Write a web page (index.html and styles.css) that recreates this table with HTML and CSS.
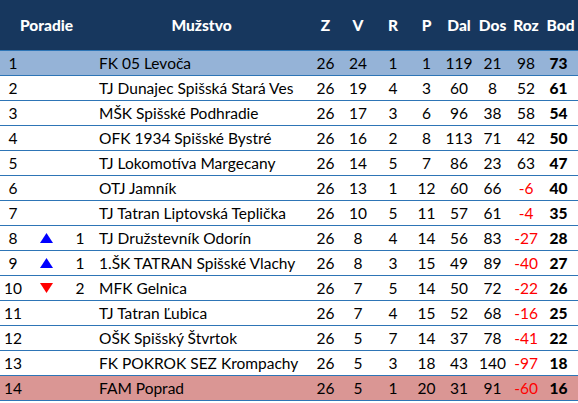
FILE: index.html
```html
<!DOCTYPE html>
<html lang="sk">
<head>
  <meta charset="UTF-8" />
  <title>Tabuľka</title>
  <link rel="stylesheet" href="styles.css">
</head>
<body>
  <table class="standings">
    <colgroup>
      <col class="c-rank"><col class="c-arrow"><col class="c-move"><col class="c-team">
      <col class="c-z"><col class="c-v"><col class="c-r"><col class="c-p">
      <col class="c-dal"><col class="c-dos"><col class="c-roz"><col class="c-bod">
    </colgroup>
    <thead>
      <tr>
        <th colspan="3">Poradie</th>
        <th>Mužstvo</th>
        <th>Z</th><th>V</th><th>R</th><th>P</th><th>Dal</th><th>Dos</th><th>Roz</th><th>Bod</th>
      </tr>
    </thead>
    <tbody>
      <tr class="leader">
        <td class="rank">1</td><td></td><td></td><td class="team">FK 05 Levoča</td>
        <td>26</td><td>24</td><td>1</td><td>1</td><td>119</td><td>21</td><td>98</td><td class="pts">73</td>
      </tr>
      <tr>
        <td class="rank">2</td><td></td><td></td><td class="team">TJ Dunajec Spišská Stará Ves</td>
        <td>26</td><td>19</td><td>4</td><td>3</td><td>60</td><td>8</td><td>52</td><td class="pts">61</td>
      </tr>
      <tr>
        <td class="rank">3</td><td></td><td></td><td class="team">MŠK Spišské Podhradie</td>
        <td>26</td><td>17</td><td>3</td><td>6</td><td>96</td><td>38</td><td>58</td><td class="pts">54</td>
      </tr>
      <tr>
        <td class="rank">4</td><td></td><td></td><td class="team">OFK 1934 Spišské Bystré</td>
        <td>26</td><td>16</td><td>2</td><td>8</td><td>113</td><td>71</td><td>42</td><td class="pts">50</td>
      </tr>
      <tr>
        <td class="rank">5</td><td></td><td></td><td class="team">TJ Lokomotíva Margecany</td>
        <td>26</td><td>14</td><td>5</td><td>7</td><td>86</td><td>23</td><td>63</td><td class="pts">47</td>
      </tr>
      <tr>
        <td class="rank">6</td><td></td><td></td><td class="team">OTJ Jamník</td>
        <td>26</td><td>13</td><td>1</td><td>12</td><td>60</td><td>66</td><td class="neg">-6</td><td class="pts">40</td>
      </tr>
      <tr>
        <td class="rank">7</td><td></td><td></td><td class="team">TJ Tatran Liptovská Teplička</td>
        <td>26</td><td>10</td><td>5</td><td>11</td><td>57</td><td>61</td><td class="neg">-4</td><td class="pts">35</td>
      </tr>
      <tr>
        <td class="rank">8</td>
        <td><svg class="arrow" width="13" height="10" viewBox="0 0 13 10"><polygon points="6.5,0 13,10 0,10" fill="#0000ff"/></svg></td>
        <td>1</td><td class="team">TJ Družstevník Odorín</td>
        <td>26</td><td>8</td><td>4</td><td>14</td><td>56</td><td>83</td><td class="neg">-27</td><td class="pts">28</td>
      </tr>
      <tr>
        <td class="rank">9</td>
        <td><svg class="arrow" width="13" height="10" viewBox="0 0 13 10"><polygon points="6.5,0 13,10 0,10" fill="#0000ff"/></svg></td>
        <td>1</td><td class="team">1.ŠK TATRAN Spišské Vlachy</td>
        <td>26</td><td>8</td><td>3</td><td>15</td><td>49</td><td>89</td><td class="neg">-40</td><td class="pts">27</td>
      </tr>
      <tr>
        <td class="rank">10</td>
        <td><svg class="arrow" width="13" height="10" viewBox="0 0 13 10"><polygon points="0,0 13,0 6.5,10" fill="#ff0000"/></svg></td>
        <td>2</td><td class="team">MFK Gelnica</td>
        <td>26</td><td>7</td><td>5</td><td>14</td><td>50</td><td>72</td><td class="neg">-22</td><td class="pts">26</td>
      </tr>
      <tr>
        <td class="rank">11</td><td></td><td></td><td class="team">TJ Tatran Ľubica</td>
        <td>26</td><td>7</td><td>4</td><td>15</td><td>52</td><td>68</td><td class="neg">-16</td><td class="pts">25</td>
      </tr>
      <tr>
        <td class="rank">12</td><td></td><td></td><td class="team">OŠK Spišský Štvrtok</td>
        <td>26</td><td>5</td><td>7</td><td>14</td><td>37</td><td>78</td><td class="neg">-41</td><td class="pts">22</td>
      </tr>
      <tr>
        <td class="rank">13</td><td></td><td></td><td class="team">FK POKROK SEZ Krompachy</td>
        <td>26</td><td>5</td><td>3</td><td>18</td><td>43</td><td>140</td><td class="neg">-97</td><td class="pts">18</td>
      </tr>
      <tr class="relegated">
        <td class="rank">14</td><td></td><td></td><td class="team">FAM Poprad</td>
        <td>26</td><td>5</td><td>1</td><td>20</td><td>31</td><td>91</td><td class="neg">-60</td><td class="pts">16</td>
      </tr>
    </tbody>
  </table>
</body>
</html>
```

FILE: styles.css
```css
* {
  box-sizing: border-box;
}
body {
  margin: 0;
  background: #fff;
  font-family: Lato, 'Open Sans', sans-serif;
  font-size: 15.5px;
  color: #000;
}
.standings {
  width: 578px;
  border-collapse: collapse;
  table-layout: fixed;
}
.c-rank { width: 26px; }
.c-arrow { width: 41px; }
.c-move { width: 26px; }
.c-team { width: 217px; }
.c-z { width: 31px; }
.c-v { width: 34px; }
.c-r { width: 36px; }
.c-p { width: 31px; }
.c-dal { width: 34px; }
.c-dos { width: 33px; }
.c-roz { width: 34px; }
.c-bod { width: 35px; }

.standings th {
  height: 50px;
  background: #17375e;
  color: #fff;
  font-weight: 900;
  text-align: center;
  padding: 0;
  border-bottom: 1px solid #2e75b6;
}
.standings td {
  height: 25px;
  padding: 0;
  text-align: center;
  white-space: nowrap;
  border-bottom: 1px solid #2e75b6;
}
.standings td.team {
  text-align: left;
  padding-left: 6px;
}
.standings td.pts {
  font-weight: 900;
  padding-right: 4px;
}
.standings td.neg {
  color: #ff0000;
}
.arrow {
  display: block;
  margin: 0 auto;
}
.leader td {
  background: #95b3d7;
}
.relegated td {
  background: #da9694;
}
```
